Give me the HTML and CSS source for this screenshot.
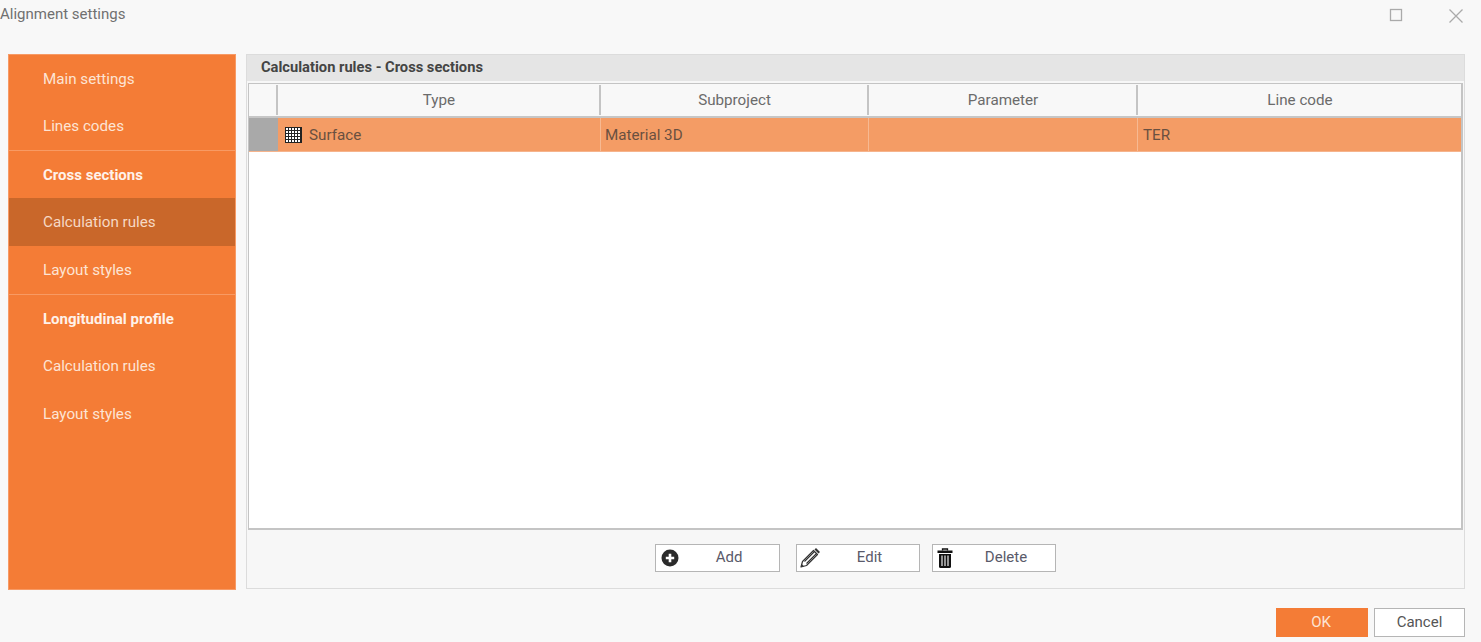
FILE: index.html
```html
<!DOCTYPE html>
<html lang="en">
<head>
<meta charset="utf-8">
<title>Alignment settings</title>
<link rel="stylesheet" href="styles.css">
</head>
<body>
<div class="dialog">
  <header class="titlebar">
    <span class="title">Alignment settings</span>
    <div class="window-controls">
      <svg class="win-icon" width="14" height="14" viewBox="0 0 14 14"><rect x="1.5" y="1.5" width="11" height="11" fill="none" stroke="#aaa" stroke-width="1.3"/></svg>
      <svg class="win-icon" width="16" height="16" viewBox="0 0 16 16"><path d="M1.5 1.5L14.5 14.5M14.5 1.5L1.5 14.5" fill="none" stroke="#aaa" stroke-width="1.3"/></svg>
    </div>
  </header>
  <main class="content">
    <nav class="sidebar">
      <a class="nav-item nav-first">Main settings</a>
      <a class="nav-item">Lines codes</a>
      <div class="nav-divider"></div>
      <a class="nav-item nav-heading">Cross sections</a>
      <a class="nav-item nav-active">Calculation rules</a>
      <a class="nav-item">Layout styles</a>
      <div class="nav-divider"></div>
      <a class="nav-item nav-heading">Longitudinal profile</a>
      <a class="nav-item">Calculation rules</a>
      <a class="nav-item">Layout styles</a>
    </nav>
    <section class="panel">
      <h2 class="panel-title">Calculation rules - Cross sections</h2>
      <div class="grid">
        <div class="grid-row grid-head">
          <div class="cell cell-ind"></div>
          <div class="cell col-type">Type</div>
          <div class="cell col-sub">Subproject</div>
          <div class="cell col-par">Parameter</div>
          <div class="cell col-line">Line code</div>
        </div>
        <div class="grid-row grid-selected">
          <div class="cell cell-ind"></div>
          <div class="cell col-type">
            <svg class="cell-icon" width="17" height="16" viewBox="0 0 17 16"><rect x="0" y="0" width="17" height="16" fill="#fff"/><path d="M.5 0V16M3.5 0V16M6.5 0V16M9.5 0V16M12.5 0V16M15.5 0V16M16.5 0V16M0 .5H17M0 3.5H17M0 6.5H17M0 9.5H17M0 12.5H17M0 15.5H17" stroke="#222" stroke-width="1" fill="none"/></svg>
            Surface
          </div>
          <div class="cell col-sub">Material 3D</div>
          <div class="cell col-par"></div>
          <div class="cell col-line">TER</div>
        </div>
      </div>
      <div class="panel-actions">
        <button class="tool-btn btn-add">
          <svg class="btn-icon" width="18" height="18" viewBox="0 0 18 18"><circle cx="9" cy="9" r="8.5" fill="#2b2b2b"/><path d="M9 4.8V13.2M4.8 9H13.2" stroke="#fff" stroke-width="2.6"/></svg>
          <span>Add</span>
        </button>
        <button class="tool-btn btn-edit">
          <svg class="btn-icon" width="22" height="22" viewBox="0 0 22 22"><path d="M2 20L3.5 14.5L14.5 3.5L18.5 7.5L7.5 18.5Z" fill="#fff" stroke="#333" stroke-width="1.2" stroke-linejoin="round"/><path d="M5.5 14.5L15.5 4.5M7.5 16.5L17.5 6.5" stroke="#333" stroke-width="1.1"/><path d="M15.5 2.5L17 1L21 5L19.5 6.5Z" fill="#333"/><path d="M2 20L2.8 17L5 19.2Z" fill="#333"/></svg>
          <span>Edit</span>
        </button>
        <button class="tool-btn btn-delete">
          <svg class="btn-icon" width="16" height="20" viewBox="0 0 16 20"><path d="M5.5 2.5V1H10.5V2.5" fill="none" stroke="#111" stroke-width="1.3"/><rect x="0.5" y="2.5" width="15" height="2.5" fill="#111"/><path d="M2 6H14V18.5Q14 20 12.5 20H3.5Q2 20 2 18.5Z" fill="#111"/><path d="M5 7.5V18M8 7.5V18M11 7.5V18" stroke="#fff" stroke-width="1.1"/></svg>
          <span>Delete</span>
        </button>
      </div>
    </section>
  </main>
  <footer class="footer">
    <button class="foot-btn foot-ok">OK</button>
    <button class="foot-btn foot-cancel">Cancel</button>
  </footer>
</div>
</body>
</html>
```
FILE: styles.css
```css
* { box-sizing: border-box; }
html, body { margin: 0; height: 100%; }
body {
  background: #f8f8f8;
  font-family: Roboto, "Liberation Sans", sans-serif;
  font-size: 15px;
  color: #555;
  overflow: hidden;
}
.dialog { width: 1481px; height: 642px; display: flex; flex-direction: column; }
.titlebar { height: 54px; flex: none; display: flex; justify-content: space-between; align-items: flex-start; padding: 6px 17px 0 0; }
.title { color: #707070; font-size: 15px; line-height: 16px; }
.window-controls { display: flex; gap: 45px; padding-top: 2px; }
.win-icon { display: block; }
.content { height: 537px; flex: none; display: flex; gap: 10px; padding: 0 16px 0 8px; }
.sidebar {
  width: 228px; height: 536px; flex: none; background: #f47c36;
  border: 1px solid #f79a65; display: flex; flex-direction: column;
}
.nav-item { display: flex; align-items: center; height: 48px; flex: none; padding-left: 34px; color: #fde4d4; font-size: 15.2px; }
.nav-first { height: 47px; }
.nav-heading { color: #fff2ea; font-weight: 700; font-size: 15px; height: 47px; }
.nav-active { background: #c9672a; color: #f6d9c5; }
.nav-divider { height: 1px; flex: none; background: #f89a63; }
.panel { flex: 1; min-width: 0; height: 535px; display: flex; flex-direction: column; border: 1px solid #dcdcdc; background: #f7f7f7; }
.panel-title { margin: 0; height: 26px; flex: none; padding-left: 14px; background: #e5e5e5; font-size: 14.7px; font-weight: 700; line-height: 24px; color: #444; }
.grid { height: 447px; flex: none; margin: 2px 1px 0; border: 2px solid #c4c4c4; border-width: 1px 2px 2px 1px; background: #fff; }
.grid-row { display: flex; font-size: 15.2px; }
.grid-head { height: 34px; background: #f8f8f8; border-bottom: 2px solid #c6c6c6; padding-top: 1px; }
.grid-selected { height: 34px; background: #f49c65; color: #6a5040; border-bottom: 1px solid #f6b48c; }
.cell { display: flex; align-items: center; flex: none; }
.grid-head .cell { justify-content: center; color: #6b6b6b; border-right: 2px solid #c4c4c4; height: 30px; padding-left: 1px; }
.grid-head .col-line { border-right: 0; }
.grid-selected .cell { padding-left: 5px; border-right: 1px solid #f7b992; }
.grid-selected .col-line { border-right: 0; }
.cell-ind { width: 29px; }
.grid-selected .cell-ind { background: #a9a9a9; padding: 0; border-right: 0; }
.col-type { width: 323px; }
.col-sub { width: 268px; }
.col-par { width: 269px; }
.col-line { flex: 1; }
.grid-selected .col-type { padding-left: 7px; gap: 7px; }
.grid-selected .col-sub { padding-left: 4px; }
.cell-icon { display: block; flex: none; }
.panel-actions { flex: 1; display: flex; align-items: flex-start; padding: 14px 0 0 408px; gap: 16px; }
.tool-btn { position: relative; width: 125px; height: 28px; background: #fff; border: 1px solid #b5b5b5; font: 15px Roboto, "Liberation Sans", sans-serif; color: #5a5a6a; padding: 0 0 2px 23px; flex: none; }
.btn-edit { width: 124px; }
.btn-delete { width: 124px; margin-left: -4px; padding-left: 24px; }
.btn-icon { position: absolute; top: 50%; transform: translateY(-50%); left: 5px; display: block; }
.btn-edit .btn-icon { left: 2px; }
.btn-delete .btn-icon { left: 4px; }
.footer { flex: 1; display: flex; justify-content: flex-end; align-items: flex-start; gap: 6px; padding: 17px 16px 0 0; }
.foot-btn { width: 92px; height: 29px; font: 15px Roboto, "Liberation Sans", sans-serif; padding: 0 0 2px; }
.foot-ok { background: #f47c36; border: 0; color: #fde4d4; padding-right: 2px; }
.foot-cancel { width: 91px; background: #fff; border: 1px solid #b5b5b5; color: #555; }
```
